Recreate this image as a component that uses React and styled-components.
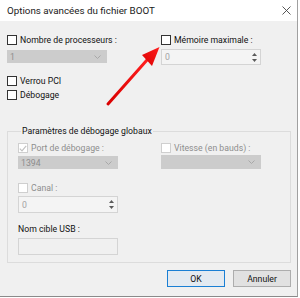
import React from "react";
import styled, { createGlobalStyle } from "styled-components";

const Global = createGlobalStyle`
  html, body { margin: 0; padding: 0; background: #ffffff; }
  body { font-family: Roboto, "Noto Sans", sans-serif; font-size: 8.7px; color: #111; }
`;

const Window = styled.div`
  position: relative;
  width: 297px;
  height: 296px;
  background: #f0f0f0;
  border-right: 1px solid #a0a0a0;
  border-bottom: 1px solid #8a8a8a;
  display: flex;
  flex-direction: column;
  overflow: hidden;
`;

const TitleBar = styled.div`
  height: 21px;
  flex: none;
  background: #ffffff;
  display: flex;
  align-items: center;
  justify-content: space-between;
  padding: 0 6px 0 7px;
  font-size: 9.8px;
  color: #1a1a1a;
`;

const Close = styled.div`
  width: 9px;
  height: 9px;
  display: flex;
  margin-right: 0px;
`;

const Body = styled.div`
  flex: 1;
  display: flex;
  flex-direction: column;
  padding-top: 14px;
`;

const TopRow = styled.div`
  display: grid;
  grid-template-columns: 154px 1fr;
  padding-left: 7px;
  height: 30px;
`;

const Col = styled.div`
  display: flex;
  flex-direction: column;
`;

const CheckRow = styled.div`
  display: flex;
  align-items: center;
  height: 10px;
  gap: 3px;
  line-height: 10px;
  color: ${p => (p.$disabled ? "#8e8e8e" : "#111")};
  margin-top: ${p => p.$mt || 0}px;
  white-space: nowrap;
`;

const Box = styled.span`
  width: 8px;
  height: 8px;
  border: 1px solid ${p => (p.$disabled ? "#cfcfcf" : "#333")};
  background: #fff;
  display: inline-flex;
  align-items: center;
  justify-content: center;
  flex: none;
`;

const Select = styled.div`
  width: 100px;
  height: ${p => p.$h || 13}px;
  margin-top: ${p => p.$mt || 0}px;
  box-sizing: border-box;
  background: #cccccc;
  display: flex;
  align-items: center;
  justify-content: space-between;
  padding: 0 6px 0 3px;
  color: #8c8c8c;
`;

const Spin = styled.div`
  width: 100px;
  height: ${p => p.$h || 17}px;
  margin-top: ${p => p.$mt || 0}px;
  box-sizing: border-box;
  background: #f4f4f4;
  border: 1px solid #d4d4d4;
  display: flex;
  align-items: stretch;
  color: #a3a3a3;
`;

const SpinText = styled.div`
  flex: 1;
  display: flex;
  align-items: center;
  padding-left: 3px;
`;

const SpinBtns = styled.div`
  width: 12px;
  display: flex;
  flex-direction: column;
  justify-content: center;
  align-items: center;
  gap: 3px;
`;

const TextBox = styled.div`
  width: 100px;
  height: 17px;
  margin-top: ${p => p.$mt || 0}px;
  box-sizing: border-box;
  border: 1px solid #d4d4d4;
  background: #f0f0f0;
`;

const LeftChecks = styled.div`
  display: flex;
  flex-direction: column;
  padding-left: 7px;
  margin-top: 11px;
`;

const Group = styled.fieldset`
  margin: 25px 0 0 7px;
  width: 284px;
  height: 138px;
  box-sizing: border-box;
  border: 1px solid #dcdcdc;
  padding: 6px 0 0 10px;
  min-width: 0;
`;

const Legend = styled.legend`
  padding: 0 1px;
  margin-left: 3px;
  color: #111;
  line-height: 12px;
  height: 12px;
`;

const GroupGrid = styled.div`
  display: grid;
  grid-template-columns: 143px 1fr;
`;

const Label = styled.div`
  height: 10px;
  line-height: 10px;
  margin-top: ${p => p.$mt || 0}px;
  color: #111;
`;

const Buttons = styled.div`
  display: flex;
  justify-content: flex-end;
  gap: 8px;
  padding-right: 6px;
  margin-top: 7px;
`;

const Button = styled.div`
  width: 58px;
  height: 17px;
  box-sizing: border-box;
  background: ${p => (p.$default ? "#e3eaf1" : "#e1e1e1")};
  border: 1px solid ${p => (p.$default ? "#1a7fd4" : "#adadad")};
  display: flex;
  align-items: center;
  justify-content: center;
  color: #111;
`;

const Arrow = styled.svg`
  position: absolute;
  left: 100px;
  top: 40px;
  pointer-events: none;
`;

const Chevron = () => (
  <svg width="7" height="4" viewBox="0 0 7 4">
    <path d="M0.5 0.5 L3.5 3.5 L6.5 0.5" fill="none" stroke="#a8a8a8" strokeWidth="1" />
  </svg>
);

const Check = () => (
  <svg width="8" height="7" viewBox="0 0 8 7">
    <path d="M0.8 3.6 L3 5.8 L7.2 0.8" fill="none" stroke="#c2c2c2" strokeWidth="1.2" />
  </svg>
);

const SpinArrows = () => (
  <SpinBtns>
    <svg width="5" height="3" viewBox="0 0 5 3"><path d="M0 3 L2.5 0 L5 3Z" fill="#5a5a5a" /></svg>
    <svg width="5" height="3" viewBox="0 0 5 3"><path d="M0 0 L2.5 3 L5 0Z" fill="#5a5a5a" /></svg>
  </SpinBtns>
);

export default function App() {
  return (
    <>
      <Global />
      <Window>
        <TitleBar>
          <span>Options avancées du fichier BOOT</span>
          <Close>
            <svg width="9" height="9" viewBox="0 0 9 9">
              <path d="M0.5 0.5 L8.5 8.5 M8.5 0.5 L0.5 8.5" stroke="#444" strokeWidth="0.9" />
            </svg>
          </Close>
        </TitleBar>
        <Body>
          <TopRow>
            <Col>
              <CheckRow><Box />Nombre de processeurs :</CheckRow>
              <Select $mt={5}><span>1</span><Chevron /></Select>
            </Col>
            <Col>
              <CheckRow><Box />Mémoire maximale :</CheckRow>
              <Spin $mt={4} $h={16}><SpinText>0</SpinText><SpinArrows /></Spin>
            </Col>
          </TopRow>
          <LeftChecks>
            <CheckRow><Box />Verrou PCI</CheckRow>
            <CheckRow $mt={4}><Box />Débogage</CheckRow>
          </LeftChecks>
          <Group>
            <Legend>Paramètres de débogage globaux</Legend>
            <GroupGrid>
              <Col>
                <CheckRow $disabled><Box $disabled><Check /></Box>Port de débogage :</CheckRow>
                <Select $mt={3}><span>1394</span><Chevron /></Select>
                <CheckRow $disabled $mt={14}><Box $disabled />Canal :</CheckRow>
                <Spin $mt={3}><SpinText>0</SpinText><SpinArrows /></Spin>
                <Label $mt={11}>Nom cible USB :</Label>
                <TextBox $mt={4} />
              </Col>
              <Col>
                <CheckRow $disabled><Box $disabled />Vitesse (en bauds) :</CheckRow>
                <Select $mt={2} $h={14}><span></span><Chevron /></Select>
              </Col>
            </GroupGrid>
          </Group>
          <Buttons>
            <Button $default>OK</Button>
            <Button>Annuler</Button>
          </Buttons>
        </Body>
        <Arrow width="70" height="75" viewBox="0 0 70 75">
          <defs>
            <linearGradient id="ag" x1="0" y1="1" x2="1" y2="0">
              <stop offset="0" stopColor="#d90000" />
              <stop offset="1" stopColor="#ff1f1f" />
            </linearGradient>
          </defs>
          <path d="M8 64 L47 20" stroke="url(#ag)" strokeWidth="3" strokeLinecap="round" />
          <path d="M59.5 7 L42 15 L52 26 Z" fill="url(#ag)" />
        </Arrow>
      </Window>
    </>
  );
}
